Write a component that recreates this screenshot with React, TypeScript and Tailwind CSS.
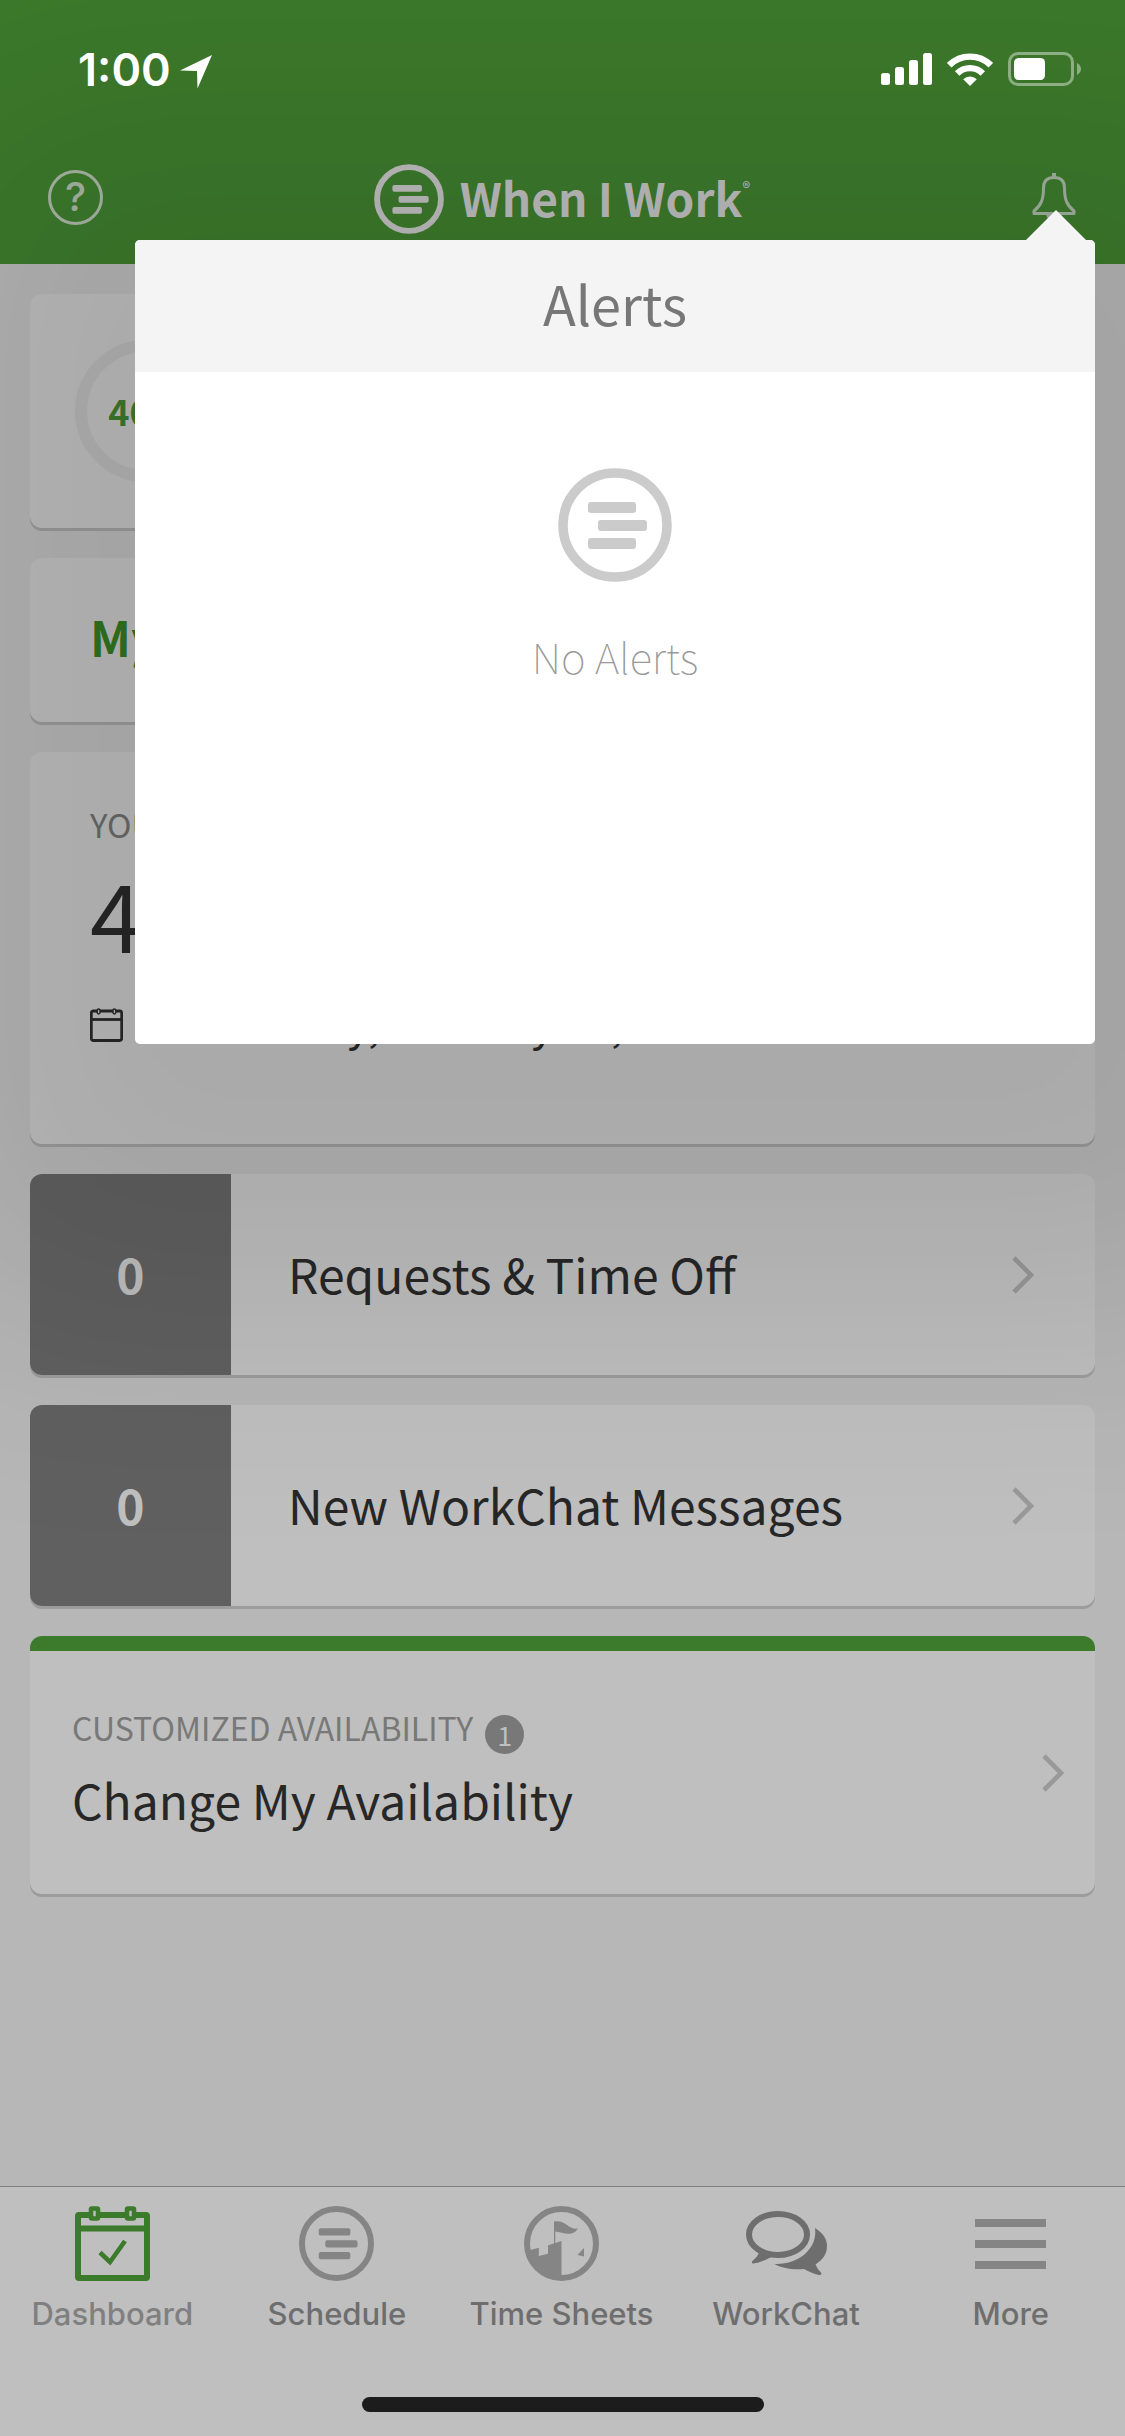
import React from "react";

function LinesMark({ className, thin = false }: { className: string; thin?: boolean }) {
  return (
    <svg viewBox="0 0 114 114" className={className} fill="none" aria-hidden="true">
      <circle cx="57" cy="57" r={thin ? 52.5 : 52} stroke="currentColor" strokeWidth={thin ? 9 : 9.5} />
      <g fill="currentColor">
        <rect x="30" y="34" width="48" height="11" rx="3" />
        <rect x="40" y="52" width="49" height="11" rx="3" />
        <rect x="30" y="70" width="48" height="11" rx="3" />
      </g>
    </svg>
  );
}

function StatusBar() {
  return (
    <div className="relative z-20 flex h-[132px] items-center justify-between pt-[6px] pl-[78px] pr-[44px] text-white">
      <div className="flex items-center gap-[9px]">
        <span className="font-['Inter',sans-serif] text-[45px] leading-none font-semibold">1:00</span>
        <svg viewBox="0 0 32 34" className="mt-[6px] h-[34px] w-[32px]" fill="currentColor" aria-hidden="true">
          <path d="M32 0 L17.5 33.5 L17 16 L0 15.5 Z" />
        </svg>
      </div>
      <div className="flex items-center gap-[15px]">
        <svg viewBox="0 0 51 32" className="h-[32px] w-[51px]" fill="currentColor" aria-hidden="true">
          <rect x="0" y="20" width="9" height="12" rx="2.5" />
          <rect x="14" y="14" width="9" height="18" rx="2.5" />
          <rect x="28" y="7" width="9" height="25" rx="2.5" />
          <rect x="42" y="0" width="9" height="32" rx="2.5" />
        </svg>
        <svg viewBox="0 0 46 33" className="h-[33px] w-[46px]" aria-hidden="true">
          <g fill="none" stroke="currentColor" strokeWidth="6.4">
            <path d="M2.2 12.2 A29.5 29.5 0 0 1 43.8 12.2" />
            <path d="M10.2 20.4 A18.2 18.2 0 0 1 35.8 20.4" />
          </g>
          <path d="M23 33 L16.2 26.2 A9.8 9.8 0 0 1 29.8 26.2 Z" fill="currentColor" />
        </svg>
        <svg viewBox="0 0 73 34" className="h-[34px] w-[73px]" aria-hidden="true">
          <rect x="1.5" y="1.5" width="63" height="31" rx="8.5" fill="none" stroke="currentColor" strokeOpacity=".42" strokeWidth="3" />
          <rect x="6" y="6" width="31" height="22" rx="4.5" fill="currentColor" />
          <path d="M69 11 Q73 13.500 73 17 Q73 20.500 69 23 Z" fill="currentColor" fillOpacity=".42" />
        </svg>
      </div>
    </div>
  );
}

function NavBar() {
  return (
    <div className="grid h-[132px] grid-cols-[1fr_auto_1fr] items-center pb-[2px] pl-[48px] pr-[49px] text-[#bcbebb]">
      <button
        type="button"
        aria-label="Help"
        className="flex size-[55px] items-center justify-center rounded-full border-[3px] border-[#a9b7a5] font-['Inter',sans-serif] text-[40px] leading-none font-medium text-[#a9b7a5]"
      >
        ?
      </button>
      <div className="flex items-center gap-[16px] pt-[4px] text-[#bfbfbf]">
        <LinesMark className="size-[70px]" />
        <span className="flex pb-[4px]">
          <span className="text-[46px] leading-[66px] font-bold">When I Work</span>
          <span className="pt-[16px] font-['Inter',sans-serif] text-[12px] leading-none">®</span>
        </span>
      </div>
      <button type="button" aria-label="Alerts" className="justify-self-end text-[#a3b3a0]">
        <svg viewBox="0 0 44 50" className="h-[50px] w-[44px]" fill="none" stroke="currentColor" strokeWidth="3" aria-hidden="true">
          <path d="M22 5.500 C14.500 5.500 11.500 9.500 11.500 16 C11.500 27 9.500 33 2 39 V41.500 H42 V39 C34.500 33 32.500 27 32.500 16 C32.500 9.500 29.500 5.500 22 5.500 Z" strokeLinejoin="round" />
          <path d="M22 1 V5 M16 42 Q17 47 22 47 Q27 47 28 42" strokeWidth="4" />
        </svg>
      </button>
    </div>
  );
}

function Chevron() {
  return (
    <svg viewBox="0 0 22 38" className="h-[38px] w-[22px] text-[#999999]" fill="none" stroke="currentColor" strokeWidth="4.600" aria-hidden="true">
      <path d="M2 2 L19 19 L2 36" />
    </svg>
  );
}

function SmallCalendar() {
  return (
    <svg viewBox="0 0 33 34" className="h-[34px] w-[33px] shrink-0" fill="none" stroke="currentColor" aria-hidden="true">
      <rect x="1.300" y="3" width="30.400" height="29.500" rx="2" strokeWidth="2.800" />
      <path d="M1 11.500 H32" strokeWidth="2.800" />
      <rect x="7.200" y="1" width="2.800" height="5" rx="1.400" fill="#bfbfbf" strokeWidth="1.400" />
      <rect x="23" y="1" width="2.800" height="5" rx="1.400" fill="#bfbfbf" strokeWidth="1.400" />
    </svg>
  );
}

const card = "rounded-[12px] bg-[#bfbfbf] shadow-[0_3px_0_#9c9c9c]";

function CountRow({ count, label }: { count: number; label: string }) {
  return (
    <a href="#" className={`flex h-[201px] items-stretch overflow-hidden ${card}`}>
      <span className="flex w-[201px] items-center justify-center bg-[#606060] pb-[4px] text-[48px] leading-none font-bold text-[#bfbfbf]">
        {count}
      </span>
      <span className="flex flex-1 items-center justify-between pl-[57px] pr-[61px]">
        <span className="pb-[4px] text-[48px] leading-[72px]">{label}</span>
        <Chevron />
      </span>
    </a>
  );
}

function DashboardIcon() {
  return (
    <svg viewBox="0 0 75 75" className="size-[75px] text-[#3c7b2c]" fill="none" stroke="currentColor" strokeWidth="6" aria-hidden="true">
      <rect x="3" y="9" width="69" height="63" rx="1" />
      <path d="M3 22.500 H72" />
      <path d="M25 46.500 L35 56 L50 35" strokeWidth="4.600" />
      <rect x="16" y="2.500" width="7" height="10" rx="1" fill="#bfbfbf" strokeWidth="4.600" />
      <rect x="52" y="2.500" width="7" height="10" rx="1" fill="#bfbfbf" strokeWidth="4.600" />
    </svg>
  );
}

function TimeSheetsIcon() {
  return (
    <svg viewBox="0 0 75 75" className="size-[75px] text-[#858585]" aria-hidden="true">
      <circle cx="37.500" cy="37.500" r="34.500" fill="none" stroke="currentColor" strokeWidth="6" />
      <g fill="currentColor">
        <path d="M4 44.500 L14.800 41.700 V50 L24 47.700 V39.200 L37.500 35 V72 C20 72 6 62 4 44.500 Z" />
        <path d="M30 38 V15.500 C42 13 44 24 54 22.500 C48 32 38 26 31.300 25.500 V38 Z" />
        <path d="M53.500 49 L60 42 V50.500 Z" />
      </g>
    </svg>
  );
}

function ChatIcon() {
  return (
    <svg viewBox="0 0 81 75" className="h-[75px] w-[81px] text-[#6e6e6e]" fill="currentColor" aria-hidden="true">
      <ellipse cx="32" cy="28.500" rx="29" ry="20.500" fill="none" stroke="currentColor" strokeWidth="6" />
      <path d="M12 41.500 L19.500 44 L19 47.500 L22.500 45 L27 50 C20 54 13 57 7.500 57.500 C5.500 57.500 5.500 55.500 7 54.500 Q12 50 13 46.500 Z" />
      <path d="M69 22 C77 27 81 33 81 40 C81 48 77 53.500 69.500 58.500 Q71.500 63.500 75 66.500 C76 68 75 69.500 73 69 C68 68 62 65.500 58 63 C46 64 35 62 28.500 58 C52 59 72 43 69 22 Z" />
    </svg>
  );
}

function MoreIcon() {
  return (
    <svg viewBox="0 0 71 75" className="h-[75px] w-[71px] text-[#858585]" fill="currentColor" aria-hidden="true">
      <rect x="0" y="13" width="71" height="8" />
      <rect x="0" y="34" width="71" height="8" />
      <rect x="0" y="55" width="71" height="8" />
    </svg>
  );
}

function TabBar() {
  const tabs = [
    { label: "Dashboard", icon: <DashboardIcon />, active: true },
    { label: "Schedule", icon: <LinesMark thin className="size-[75px] text-[#858585]" />, active: false },
    { label: "Time Sheets", icon: <TimeSheetsIcon />, active: false },
    { label: "WorkChat", icon: <ChatIcon />, active: false },
    { label: "More", icon: <MoreIcon />, active: false },
  ];
  return (
    <footer className="border-t border-[#7f7f7f] bg-[#bfbfbf]">
      <nav className="grid h-[210px] grid-cols-5 pt-[19px] pr-[2px]">
        {tabs.map((tab) => (
          <a key={tab.label} href="#" className="flex flex-col items-center gap-[15px]">
            {tab.icon}
            <span
              className={`font-['Inter',sans-serif] text-[31px] leading-[36px] font-medium whitespace-nowrap ${
                tab.active ? "text-[#808080]" : "text-[#6e6e6e]"
              }`}
            >
              {tab.label}
            </span>
          </a>
        ))}
      </nav>
      <div className="mx-auto mb-[24px] h-[15px] w-[402px] rounded-full bg-[#1c1c1c]" />
    </footer>
  );
}

function AlertsPopover() {
  return (
    <section
      aria-label="Alerts"
      className="absolute top-[240px] right-[30px] left-[135px] z-10 h-[804px] rounded-[5px] bg-white shadow-[0_55px_300px_215px_rgba(0,0,0,0.11)]"
    >
      <svg viewBox="0 0 60 30" className="absolute right-[9px] bottom-full h-[30px] w-[60px]" fill="#f4f4f4" aria-hidden="true">
        <path d="M0 30 L30 0 L60 30 Z" />
      </svg>
      <h2 className="flex h-[132px] items-center justify-center rounded-t-[5px] bg-[#f4f4f4] pb-[6px] text-[54px] leading-none text-[#777777]">
        Alerts
      </h2>
      <div className="flex flex-col items-center gap-[38px] pt-[96px]">
        <LinesMark className="size-[114px] text-[#cbcbcb]" />
        <p className="text-[42px] leading-[72px] font-thin text-[#999999]">No Alerts</p>
      </div>
    </section>
  );
}

export default function App() {
  return (
    <div className="relative flex min-h-screen flex-col overflow-hidden bg-[#b7b7b7] font-['Noto_Sans_CJK_SC','Noto_Sans',sans-serif] text-[#272727]">
      <header className="bg-[#3d7b2c]">
        <StatusBar />
        <NavBar />
      </header>

      <main className="flex flex-1 flex-col gap-[30px] p-[30px]">
        <section className={`flex h-[234px] items-center pl-[45px] ${card}`}>
          <div className="flex size-[142px] items-center justify-center rounded-full border-[12px] border-[#b6b6b6] pb-[2px] text-[36px] leading-none font-bold text-[#3d7b2c]">
            40.0
          </div>
        </section>

        <a href="#" className={`flex h-[164px] items-center pb-[8px] pl-[60px] text-[48px] leading-none font-bold text-[#33751f] ${card}`}>
          My Schedule
        </a>

        <section className={`flex h-[392px] flex-col px-[60px] pt-[48px] ${card}`}>
          <p className="text-[33px] leading-[48px] text-[#6b6b6b]">YOUR NEXT SHIFT</p>
          <p className="mt-[10px] text-[94px] leading-[108px]">4:00 PM</p>
          <div className="mt-[26px] flex items-center gap-[15px]">
            <SmallCalendar />
            <p className="pb-[6px] text-[43px] leading-[60px]">Wednesday, January 30, 2019</p>
          </div>
        </section>

        <CountRow count={0} label="Requests &amp; Time Off" />
        <CountRow count={0} label="New WorkChat Messages" />

        <a href="#" className={`flex h-[258px] items-center justify-between overflow-hidden border-t-[15px] border-[#3d7b2c] pl-[42px] pr-[31px] ${card}`}>
          <span className="flex flex-col pb-[8px]">
            <span className="flex items-center gap-[12px]">
              <span className="text-[32px] leading-[60px] text-[#787878]">CUSTOMIZED AVAILABILITY</span>
              <span className="mt-[16px] flex size-[39px] items-center justify-center rounded-full bg-[#787878] text-[27px] leading-none text-[#bfbfbf]">
                1
              </span>
            </span>
            <span className="text-[48px] leading-[84px]">Change My Availability</span>
          </span>
          <Chevron />
        </a>
      </main>

      <TabBar />
      <AlertsPopover />
    </div>
  );
}
